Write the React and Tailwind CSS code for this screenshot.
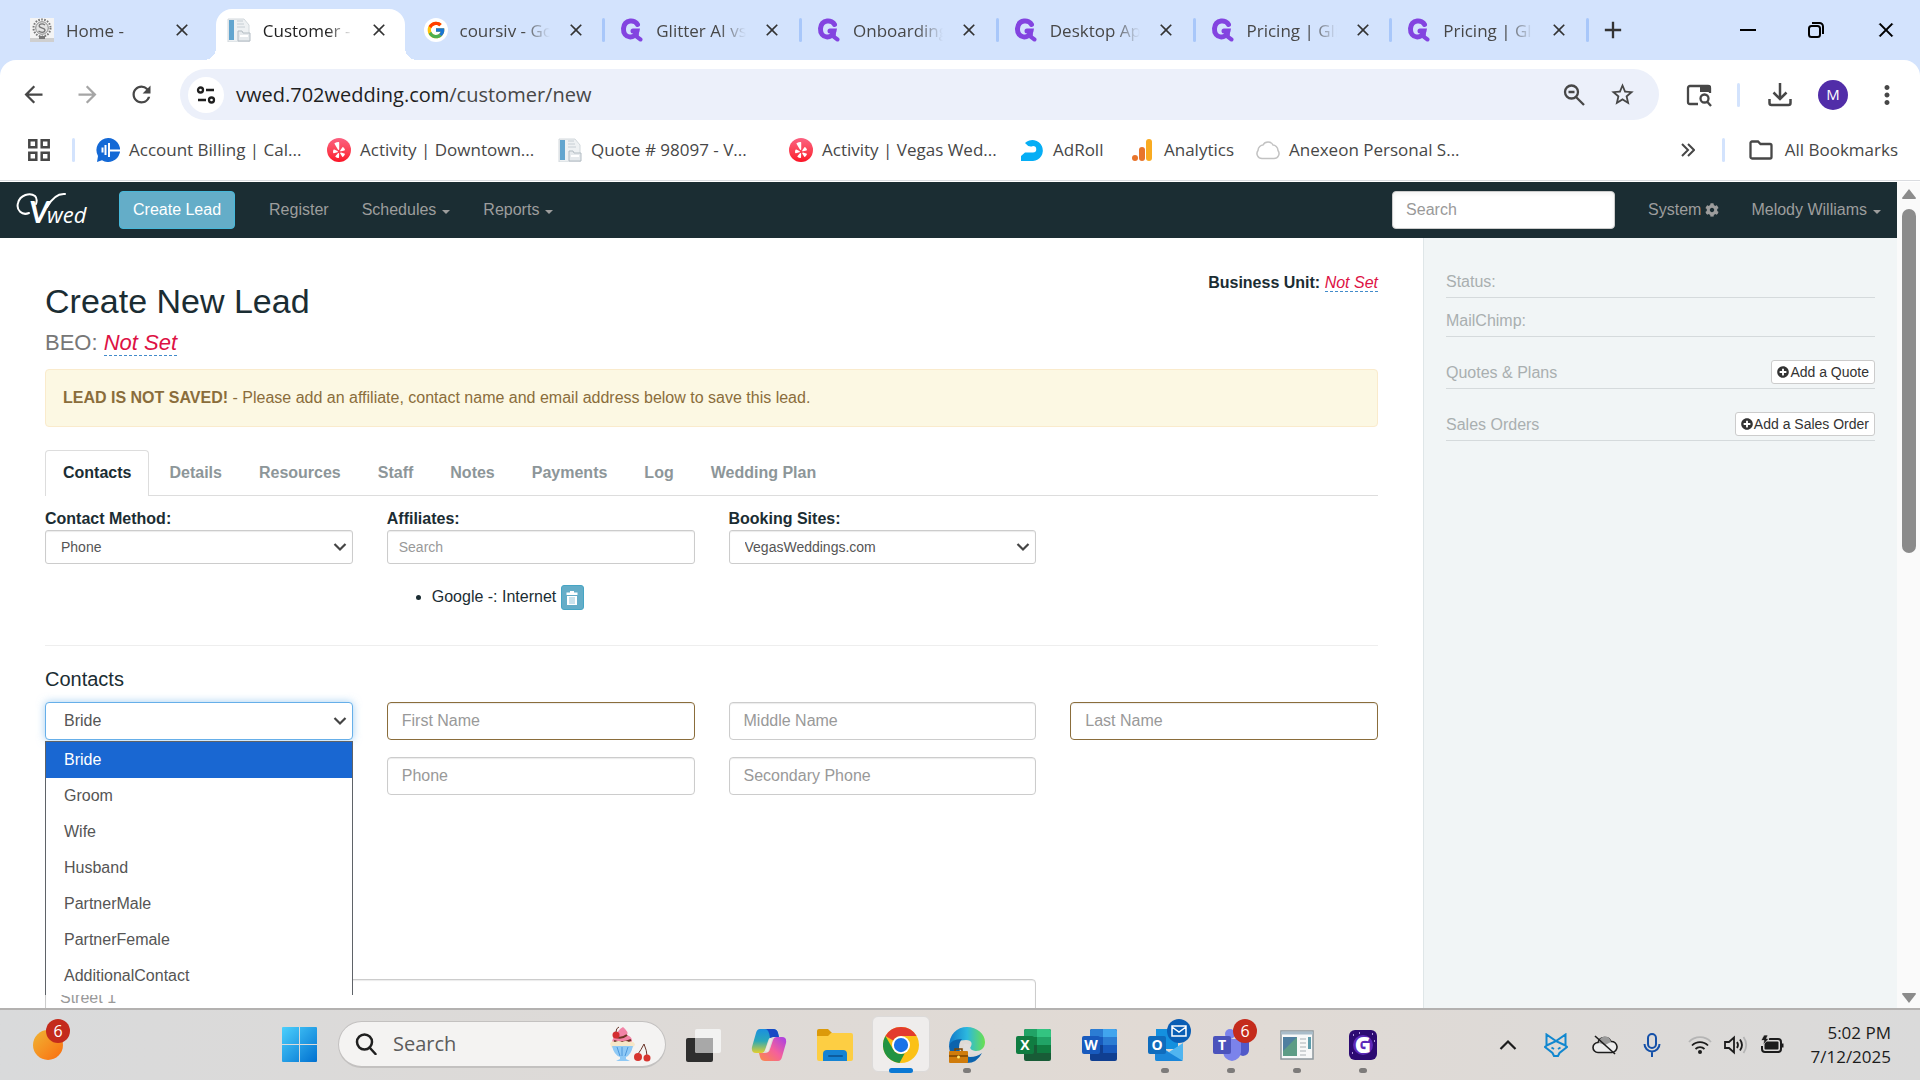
import { FcGoogle } from 'react-icons/fc';
import { FaYelp, FaCog, FaPlusCircle } from 'react-icons/fa';
import {
  MdArrowBack,
  MdArrowForward,
  MdRefresh,
  MdStarBorder,
  MdMoreVert,
  MdClose,
  MdAdd,
} from 'react-icons/md';
import { VscChromeClose } from 'react-icons/vsc';

const browserTabs = [
  { title: 'Home -', icon: 'home' },
  { title: 'Customer -', icon: 'page', active: true },
  { title: 'coursiv - Go', icon: 'google' },
  { title: 'Glitter AI vs', icon: 'glitter' },
  { title: 'Onboarding', icon: 'glitter' },
  { title: 'Desktop Ap', icon: 'glitter' },
  { title: 'Pricing | Gli', icon: 'glitter' },
  { title: 'Pricing | Gli', icon: 'glitter' },
];

const bookmarks = [
  { title: 'Account Billing | Cal...', icon: 'callrail', width: 'w-[231px]' },
  { title: 'Activity | Downtown...', icon: 'yelp', width: 'w-[231px]' },
  { title: 'Quote # 98097 - V...', icon: 'page', width: 'w-[231px]' },
  { title: 'Activity | Vegas Wed...', icon: 'yelp', width: 'w-[231px]' },
  { title: 'AdRoll', icon: 'adroll', width: 'w-[111px]' },
  { title: 'Analytics', icon: 'analytics', width: 'w-[125px]' },
  { title: 'Anexeon Personal S...', icon: 'cloud', width: 'w-[231px]' },
];

const leadTabs = ['Contacts', 'Details', 'Resources', 'Staff', 'Notes', 'Payments', 'Log', 'Wedding Plan'];

const contactTypes = [
  'Bride',
  'Groom',
  'Wife',
  'Husband',
  'PartnerMale',
  'PartnerFemale',
  'AdditionalContact',
];

const SiteIcon = ({ name }) => {
  switch (name) {
    case 'home':
      return (
        <svg viewBox="0 0 24 24" className="size-6 shrink-0">
          <rect width="24" height="24" fill="#f4f4f4" />
          <rect y="20" width="24" height="4" fill="#cfcfcf" />
          <circle cx="12" cy="10" r="8.5" fill="none" stroke="#777" strokeWidth="2" strokeDasharray="1.6 1.4" />
          <circle cx="12" cy="10" r="6.3" fill="#e4e4e4" stroke="#888" />
          <path d="M15 7c-3-2.500-7-.5-5.500 1.800 1.500 1.700 6 1 5.500 3.700-.6 2.500-4.500 2.300-6.500.6" fill="none" stroke="#777" strokeWidth="1.300" />
          <rect x="9" y="18" width="6" height="3" fill="#777" />
        </svg>
      );
    case 'page':
      return (
        <svg viewBox="0 0 24 24" className="size-6 shrink-0">
          <path d="M1 1h16l5 6v17H1z" fill="#eef1f3" stroke="#d2d8dc" />
          <rect x="2" y="2" width="5" height="20" fill="#62a5cf" />
          <path d="M10 3h6M10 6h7M10 9h8" stroke="#c6ced4" />
          <path d="M11 13h4l1 2h7v8H11z" fill="#e6eaed" stroke="#b3bcc3" />
          <path d="M13 18h8" stroke="#fff" strokeWidth="2" />
        </svg>
      );
    case 'google':
      return (
        <span className="flex size-6 shrink-0 items-center justify-center rounded-full bg-white">
          <FcGoogle className="size-5" />
        </span>
      );
    case 'glitter':
      return (
        <svg viewBox="0 0 24 24" className="size-6 shrink-0" fill="none" stroke="#8344e0" strokeLinecap="round">
          <path d="M17.500 6.500C15.500 1.800 4.500.8 3.500 10.500c-.6 10.500 12 11 13.500 2.500h-4" strokeWidth="5" />
          <path d="M16.500 13l.5 6 3.500 2.500" strokeWidth="4" />
        </svg>
      );
    case 'callrail':
      return (
        <svg viewBox="0 0 24 24" className="size-6 shrink-0">
          <path d="M12 0a12 12 0 1 1-6 22.300L1 24l1-6A12 12 0 0 1 12 0z" fill="#1469d6" />
          <path d="M6.500 9.500v5M9.500 7v10M13 5v14M13 12.500h11" stroke="#fff" strokeWidth="2" />
        </svg>
      );
    case 'yelp':
      return (
        <span className="flex size-6 shrink-0 items-center justify-center rounded-full bg-linear-to-b from-[#fb6080] to-[#fb0b22] text-white">
          <FaYelp className="size-4" />
        </span>
      );
    case 'adroll':
      return (
        <svg viewBox="0 0 24 24" className="size-6 shrink-0">
          <path d="M5 5A10.500 10.500 0 1 1 13 23H1v-5l4-3.500h8a3 3 0 0 0 0-6.500q-4 2-8-3z" fill="#06aef5" />
        </svg>
      );
    case 'analytics':
      return (
        <svg viewBox="0 0 24 24" className="size-6 shrink-0">
          <rect x="15" y="1" width="6" height="22" rx="3" fill="#f9ab21" />
          <rect x="8" y="9" width="6" height="14" rx="3" fill="#e8742b" />
          <circle cx="4" cy="20" r="3" fill="#e8742b" />
        </svg>
      );
    default:
      return (
        <svg viewBox="0 0 24 24" className="size-6 shrink-0">
          <path
            d="M6 20.500a5 5 0 0 1-4-8C2 9 5 7 7 7c2-4 8-4 10 0 2 0 5 2 5 5.500a5 5 0 0 1-4 8z"
            fill="#fff"
            stroke="#c2c2c2"
            strokeWidth="1.500"
          />
        </svg>
      );
  }
};

const TabStrip = () => (
  <div className="flex h-[60px] items-center bg-[#d3e3fd]">
    <div className="ml-[19px] flex h-full w-[1574px]">
      {browserTabs.map((tab, i) => (
        <div key={i} className="relative flex min-w-0 flex-1 items-center pl-[11px]">
          {tab.active && (
            <>
              <span className="absolute top-[9px] right-2 bottom-0 left-0 rounded-t-2xl bg-white" />
              <span className="absolute bottom-0 -left-3 size-3 bg-[radial-gradient(circle_at_0_0,transparent_12px,#fff_12px)]" />
              <span className="absolute -right-1 bottom-0 size-3 bg-[radial-gradient(circle_at_100%_0,transparent_12px,#fff_12px)]" />
            </>
          )}
          <div className="relative flex items-center">
            <SiteIcon name={tab.icon} />
            <span
              className={`ml-3 w-[90px] overflow-hidden pt-px whitespace-nowrap text-[17px] leading-6 [mask-image:linear-gradient(to_right,#000_70%,transparent)] ${
                tab.active ? 'text-[#1f1f1f]' : 'text-[#474747]'
              }`}
            >
              {tab.title}
            </span>
            <button type="button" aria-label="Close tab" className="ml-4 text-[#333]">
              <MdClose className="size-5" />
            </button>
          </div>
          {i > 1 && <span className="absolute top-[18px] right-1 h-6 w-[3px] rounded bg-[#a8c7fa]" />}
        </div>
      ))}
    </div>
    <button type="button" aria-label="New tab" className="ml-[6px] text-[#333]">
      <MdAdd className="size-7" />
    </button>
    <div className="ml-auto flex items-center gap-[51px] pr-6 text-black">
      <button type="button" aria-label="Minimize" className="h-[2px] w-4 bg-black" />
      <button type="button" aria-label="Restore">
        <svg viewBox="0 0 18 18" className="size-[18px]" fill="none" stroke="currentColor" strokeWidth="2">
          <rect x="2" y="5" width="11" height="11" rx="2.500" />
          <path d="M5 2h7.500A3.500 3.500 0 0 1 16 5.500V13" />
        </svg>
      </button>
      <button type="button" aria-label="Close">
        <VscChromeClose className="size-5" strokeWidth="0.500" />
      </button>
    </div>
  </div>
);

const Toolbar = () => (
  <div className="bg-[#d3e3fd]">
    <div className="flex h-[69px] items-center rounded-t-2xl bg-white pr-[18px] pl-5 text-[#474747]">
      <button type="button" aria-label="Back">
        <MdArrowBack className="size-[27px]" />
      </button>
      <button type="button" aria-label="Forward" className="ml-[27px] text-[#a5a5a5]">
        <MdArrowForward className="size-[27px]" />
      </button>
      <button type="button" aria-label="Reload" className="ml-[27px]">
        <MdRefresh className="size-[27px]" />
      </button>
      <div className="ml-[25px] flex h-[51px] flex-1 items-center rounded-full bg-[#ecf0fa] pr-[23px] pl-2">
        <button
          type="button"
          aria-label="Site information"
          className="flex size-9 items-center justify-center rounded-full bg-white text-[#1f1f1f]"
        >
          <svg viewBox="0 0 20 20" className="size-5" fill="none" stroke="currentColor" strokeWidth="2.300">
            <circle cx="4.500" cy="5" r="2.500" />
            <path d="M10 5h8M2 15h8" />
            <circle cx="15.500" cy="15" r="2.500" />
          </svg>
        </button>
        <p className="ml-3 flex-1 text-[20px] text-[#474747]">
          <span className="text-[#1f1f1f]">vwed.702wedding.com</span>/customer/new
        </p>
        <button type="button" aria-label="Zoom">
          <svg viewBox="0 0 22 22" className="size-[22px]" fill="none" stroke="currentColor" strokeWidth="2.300">
            <circle cx="8.500" cy="8" r="6.500" />
            <path d="M5.500 8h6M13 13l8 8" />
          </svg>
        </button>
        <button type="button" aria-label="Bookmark this page" className="ml-6">
          <MdStarBorder className="size-[27px]" />
        </button>
      </div>
      <button type="button" aria-label="Search this page" className="ml-[27px]">
        <svg viewBox="0 0 26 24" className="h-6 w-[26px]" fill="none" stroke="currentColor" strokeWidth="2.300">
          <path d="M12 21H4a2 2 0 0 1-2-2V5a2 2 0 0 1 2-2h18a2 2 0 0 1 2 2v5" />
          <path d="M14 2h8a3 3 0 0 1 3 3v4H14z" fill="currentColor" stroke="none" />
          <circle cx="18.500" cy="15.500" r="4" />
          <path d="M21 18.500l4 4.500" />
        </svg>
      </button>
      <span className="ml-[25px] h-6 w-[3px] rounded bg-[#d3e3fd]" />
      <button type="button" aria-label="Downloads" className="ml-7">
        <svg viewBox="0 0 24 24" className="size-6" fill="none" stroke="currentColor" strokeWidth="2.500">
          <path d="M12 0v15M5.500 9.500L12 16l6.500-6.500M1.500 16v4a2 2 0 0 0 2 2h17a2 2 0 0 0 2-2v-4" />
        </svg>
      </button>
      <button
        type="button"
        className="ml-[26px] flex size-[30px] items-center justify-center rounded-full bg-[#512da8] text-[15px] text-white"
      >
        M
      </button>
      <button type="button" aria-label="Menu" className="ml-6">
        <MdMoreVert className="size-[30px]" />
      </button>
    </div>
  </div>
);

const Bookmarks = () => (
  <div className="flex h-[52px] items-center border-b border-[#dadce0] bg-white pr-[22px] pb-[10px] pl-7 text-[17px] text-[#474747]">
    <svg viewBox="0 0 22 22" className="size-[22px]" fill="none" stroke="currentColor" strokeWidth="2.500">
      <path d="M1.300 1.300h7v7h-7zM13.700 1.300h7v7h-7zM1.300 13.700h7v7h-7zM13.700 13.700h7v7h-7z" />
    </svg>
    <span className="mr-[21px] ml-[22px] h-6 w-[3px] rounded bg-[#d3e3fd]" />
    {bookmarks.map((b) => (
      <a key={b.title} href="#" className={`flex shrink-0 items-center gap-[9px] whitespace-nowrap ${b.width}`}>
        <SiteIcon name={b.icon} />
        {b.title}
      </a>
    ))}
    <svg viewBox="0 0 14 14" className="ml-auto size-[14px]" fill="none" stroke="currentColor" strokeWidth="2">
      <path d="M1 1l6 6-6 6M7 1l6 6-6 6" />
    </svg>
    <span className="ml-[27px] h-6 w-[3px] rounded bg-[#d3e3fd]" />
    <a href="#" className="ml-6 flex items-center gap-3">
      <svg viewBox="0 0 24 20" className="h-5 w-6" fill="none" stroke="currentColor" strokeWidth="2.300">
        <path d="M1.500 3a1.500 1.500 0 0 1 1.500-1.500h6L11.500 4H21a1.500 1.500 0 0 1 1.500 1.500V17a1.500 1.500 0 0 1-1.500 1.500H3A1.500 1.500 0 0 1 1.500 17z" />
      </svg>
      All Bookmarks
    </a>
  </div>
);

const Caret = () => (
  <svg viewBox="0 0 8 4" className="mt-[3px] h-1 w-2" fill="currentColor">
    <path d="M0 0h8L4 4z" />
  </svg>
);

const Navbar = () => (
  <nav className="flex h-14 items-center bg-[#1b2d33] pr-4 pl-4 text-[#9d9d9d]">
    <a href="#" aria-label="Vwed">
      <svg viewBox="0 0 74 36" className="h-9 w-[74px]" fill="none" stroke="#fff" strokeLinecap="round">
        {/* swash around the V */}
        <path d="M13 21C6 24 0 18 2 11 4 3 14 0 19 4c2 2 2 5 1 8" strokeWidth="2" />
        <path d="M31 15Q39 1 49 2" strokeWidth="2" />
        <text x="13" y="31" fill="#fff" stroke="none" fontStyle="italic">
          <tspan fontFamily="Lato" fontSize="31" fontWeight="700">
            V
          </tspan>
          <tspan x="31" fontFamily="Open Sans" fontSize="22">
            wed
          </tspan>
        </text>
      </svg>
    </a>
    <button
      type="button"
      className="ml-[29px] h-[38px] rounded border border-[#46b8da] bg-[#64adc8] px-[13px] text-white"
    >
      Create Lead
    </button>
    <a href="#" className="ml-[34px]">
      Register
    </a>
    <a href="#" className="ml-[33px] flex items-center gap-[6px]">
      Schedules <Caret />
    </a>
    <a href="#" className="ml-[33px] flex items-center gap-[6px]">
      Reports <Caret />
    </a>
    <input
      type="text"
      aria-label="Search"
      placeholder="Search"
      className="ml-auto h-[38px] w-[223px] rounded border border-[#ccc] bg-white px-[13px] shadow-inner placeholder:text-[#999]"
    />
    <a href="#" className="ml-[33px] flex items-center gap-1">
      System <FaCog className="size-[14px]" />
    </a>
    <a href="#" className="ml-8 flex items-center gap-[6px]">
      Melody Williams <Caret />
    </a>
  </nav>
);

const NotSet = () => (
  <a href="#" className="border-b border-dashed border-[#428bca] text-[#dd1144] italic">
    Not Set
  </a>
);

const SelectArrow = () => (
  <svg
    viewBox="0 0 14 10"
    className="pointer-events-none absolute top-1/2 right-[6px] h-[10px] w-[14px] -translate-y-1/2"
    fill="none"
    stroke="#444"
    strokeWidth="2.200"
  >
    <path d="M1.500 2L7 7.500 12.500 2" />
  </svg>
);

const smallField =
  'h-[34px] w-full appearance-none rounded-[3px] border border-[#ccc] bg-white text-[14px] text-[#555] shadow-[inset_0_1px_1px_rgba(0,0,0,0.08)] placeholder:text-[#999]';
const field =
  'h-[38px] w-full appearance-none rounded border bg-white px-[14px] text-[#555] shadow-[inset_0_1px_1px_rgba(0,0,0,0.08)] placeholder:text-[#999]';

const LeadForm = () => (
  <main className="min-w-0 flex-1 px-[45px] pt-[37px]">
    <div className="flex items-start justify-between">
      <div className="pt-[7px]">
        <h1 className="text-[34px] leading-[38px]">Create New Lead</h1>
        <p className="mt-[10px] mb-[13px] text-[22px] leading-[26px] text-[#777]">
          BEO: <NotSet />
        </p>
      </div>
      <p className="leading-4">
        <b>Business Unit:</b> <NotSet />
      </p>
    </div>

    <div className="flex h-[58px] items-center rounded border border-[#faebcc] bg-[#fcf8e3] px-[17px] text-[#8a6d3b]">
      <p>
        <b>LEAD IS NOT SAVED!</b> - Please add an affiliate, contact name and email address below to save this lead.
      </p>
    </div>

    <div className="mt-[23px] flex h-[46px] gap-[3px] border-b border-[#ddd] font-bold text-[#8d9699]">
      {leadTabs.map((tab, i) => (
        <button
          key={tab}
          type="button"
          className={
            i === 0
              ? '-mb-px rounded-t border border-b-0 border-[#ddd] bg-white px-[17px] pb-[2px] text-[#1b2d33]'
              : 'px-[17px]'
          }
        >
          {tab}
        </button>
      ))}
    </div>

    <div className="mt-[13px] grid grid-cols-4 gap-x-[34px]">
      <div>
        <label htmlFor="method" className="mb-px block leading-5 font-bold">
          Contact Method:
        </label>
        <div className="relative">
          <select id="method" className={`${smallField} px-[15px]`}>
            <option>Phone</option>
          </select>
          <SelectArrow />
        </div>
      </div>
      <div>
        <label htmlFor="affiliates" className="mb-px block leading-5 font-bold">
          Affiliates:
        </label>
        <input id="affiliates" type="text" placeholder="Search" className={`${smallField} px-[11px]`} />
        <ul className="mt-[20px] list-disc pl-[45px]">
          <li className="leading-[26px]">
            Google -: Internet{' '}
            <button
              type="button"
              aria-label="Remove affiliate"
              className="inline-flex h-[25px] w-[23px] items-center justify-center rounded-[3px] border border-[#46a5c4] bg-[#64adc8] align-middle text-white"
            >
              <svg viewBox="0 0 12 14" className="h-[14px] w-3" fill="currentColor">
                <path d="M4 0h4v1.500h3.500V4H.5V1.500H4z" />
                <path d="M1 5h10v9H1z" />
                <path d="M4 6v7M6 6v7M8 6v7" stroke="#64adc8" strokeWidth=".7" />
              </svg>
            </button>
          </li>
        </ul>
      </div>
      <div>
        <label htmlFor="sites" className="mb-px block leading-5 font-bold">
          Booking Sites:
        </label>
        <div className="relative">
          <select id="sites" className={`${smallField} px-[15px]`}>
            <option>VegasWeddings.com</option>
          </select>
          <SelectArrow />
        </div>
      </div>
    </div>

    <hr className="mt-[35px] border-[#eee]" />
    <h4 className="mt-[22px] mb-3 text-[20px] leading-[22px]">Contacts</h4>

    <div className="grid grid-cols-4 gap-x-[34px] gap-y-[17px]">
      <div className="relative z-10">
        <select
          aria-label="Contact type"
          className="h-[38px] w-full appearance-none rounded border border-[#66afe9] bg-white px-[18px] text-[#555] shadow-[0_0_9px_rgba(102,175,233,0.6)] outline-none"
        >
          {contactTypes.map((type) => (
            <option key={type}>{type}</option>
          ))}
        </select>
        <SelectArrow />
        <ul
          role="listbox"
          aria-label="Contact types"
          className="absolute top-[39px] left-0 h-[254px] w-full border border-b-0 border-[#5f6368] bg-white text-[#555]"
        >
          {contactTypes.map((type, i) => (
            <li
              key={type}
              role="option"
              aria-selected={i === 0}
              className={`h-9 px-[18px] leading-9 ${i === 0 ? 'bg-[#1967d2] text-white' : ''}`}
            >
              {type}
            </li>
          ))}
        </ul>
      </div>
      <input type="text" aria-label="First Name" placeholder="First Name" className={`${field} border-[#8a6d3b]`} />
      <input type="text" aria-label="Middle Name" placeholder="Middle Name" className={`${field} border-[#ccc]`} />
      <input type="text" aria-label="Last Name" placeholder="Last Name" className={`${field} border-[#8a6d3b]`} />
      <input type="text" aria-label="Phone" placeholder="Phone" className={`${field} col-start-2 border-[#ccc]`} />
      <input
        type="text"
        aria-label="Secondary Phone"
        placeholder="Secondary Phone"
        className={`${field} border-[#ccc]`}
      />
      <input
        type="text"
        aria-label="Street 1"
        placeholder="Street 1"
        className={`${field} col-span-3 col-start-1 mt-[167px] border-[#ccc]`}
      />
    </div>
  </main>
);

const Sidebar = () => (
  <aside className="w-[474px] border-l border-[#dfe6e8] bg-[#f1f5f6] px-[22px] pt-[21px] text-[#a9afb0]">
    <p className="border-b border-[#d5dadc] pt-[13px] pb-[5px] leading-5">Status:</p>
    <p className="border-b border-[#d5dadc] pt-[13px] pb-[5px] leading-5">MailChimp:</p>
    <div className="mt-[23px] flex h-[29px] items-start justify-between border-b border-[#d5dadc]">
      <span className="leading-[26px]">Quotes &amp; Plans</span>
      <button
        type="button"
        className="flex h-6 items-center gap-px rounded-[3px] border border-[#ccc] bg-white px-[5px] text-[14px] text-[#333]"
      >
        <FaPlusCircle className="size-3" />
        Add a Quote
      </button>
    </div>
    <div className="mt-[23px] flex h-[29px] items-start justify-between border-b border-[#d5dadc]">
      <span className="leading-[26px]">Sales Orders</span>
      <button
        type="button"
        className="flex h-6 items-center gap-px rounded-[3px] border border-[#ccc] bg-white px-[5px] text-[14px] text-[#333]"
      >
        <FaPlusCircle className="size-3" />
        Add a Sales Order
      </button>
    </div>
  </aside>
);

const ScrollBar = () => (
  <div className="flex w-[23px] flex-col items-center bg-[#fafafa] pt-[6px] pb-1">
    <svg viewBox="0 0 16 12" className="h-3 w-4" fill="#8b8b8b">
      <path d="M8 1l7 9q0 1-1 1H2q-1 0-1-1z" />
    </svg>
    <div className="mt-[9px] h-[344px] w-[14px] rounded-full bg-[#8b8b8b]" />
    <svg viewBox="0 0 16 12" className="mt-auto h-3 w-4" fill="#8b8b8b">
      <path d="M8 11l7-9q0-1-1-1H2q-1 0-1 1z" />
    </svg>
  </div>
);

const OfficeIcon = ({ letter, dark, shades }) => (
  <svg viewBox="0 0 36 36" className="size-9">
    <rect x="9" y="2" width="27" height="32" rx="2" fill={shades[0]} />
    <path d="M9 4q0-2 2-2h11v8H9z" fill={shades[2]} />
    <path d="M22 2h12q2 0 2 2v6H22z" fill={shades[1]} />
    <path d="M9 10h13v8H9z" fill={shades[3]} />
    <path d="M22 10h14v8H22z" fill={shades[2]} />
    <path d="M22 18h14v8H22z" fill={shades[3]} />
    <rect x="1" y="9" width="18" height="18" rx="2" fill={dark} />
    <text x="10" y="23" textAnchor="middle" fill="#fff" fontFamily="Open Sans" fontWeight="700" fontSize="14">
      {letter}
    </text>
  </svg>
);

const AppIcon = ({ name }) => {
  switch (name) {
    case 'Task view':
      return (
        <svg viewBox="0 0 36 36" className="size-9">
          <rect x="1" y="11" width="27" height="24" rx="2" fill="#2e2e2e" />
          <rect x="10" y="2" width="26" height="24" rx="2" fill="#f6f6f6" fillOpacity=".85" />
          <path d="M10 11h18v15H12q-2 0-2-2z" fill="#a8a8a8" />
        </svg>
      );
    case 'Copilot':
      return (
        <svg viewBox="0 0 36 36" className="size-9">
          <defs>
            <linearGradient id="cop1" x1="0" y1="0" x2="0" y2="1">
              <stop offset="0" stopColor="#1b8fe0" />
              <stop offset=".5" stopColor="#2aa8b8" />
              <stop offset="1" stopColor="#e3cf2d" />
            </linearGradient>
            <linearGradient id="cop2" x1="1" y1="0" x2="0" y2="1">
              <stop offset="0" stopColor="#a63fe8" />
              <stop offset=".5" stopColor="#f4609c" />
              <stop offset="1" stopColor="#fb8b45" />
            </linearGradient>
          </defs>
          <path d="M9 2h13q4 0 5 4l1 4h-6q-4 0-5 4l-3 9q-1 3-4 3H5q-5 0-4-6l4-14q1-4 4-4z" fill="url(#cop1)" />
          <path d="M14 2h8q4 0 5 4l1 4h-6l-3 1q-1-9-5-9z" fill="#1749c4" />
          <path d="M27 34H14q-4 0-5-4l-1-4h6q4 0 5-4l3-9q1-3 4-3h5q5 0 4 6l-4 14q-1 4-4 4z" fill="url(#cop2)" />
          <path d="M19 11l2 1-4 13-3-1z" fill="#eee8e4" />
        </svg>
      );
    case 'File Explorer':
      return (
        <svg viewBox="0 0 36 36" className="size-9">
          <path d="M0 4q0-2 2-2h9l4 4v6H0z" fill="#dc9a09" />
          <path d="M14 6h20q2 0 2 2v24q0 2-2 2H2q-2 0-2-2V9h11z" fill="#fdce43" />
          <path d="M6 34v-7q0-4 4-4h16q4 0 4 4v7z" fill="#1583d3" />
          <path d="M12 29h13" stroke="#0d5c9e" strokeWidth="2" strokeLinecap="round" />
        </svg>
      );
    case 'Chrome':
      return (
        <svg viewBox="0 0 48 48" className="size-9">
          <circle cx="24" cy="24" r="24" fill="#fbc116" />
          <path d="M24 0a24 24 0 0 1 20.800 12H24a12 12 0 0 0-10.400 6L3.200 12A24 24 0 0 1 24 0z" fill="#e33b2e" />
          <path d="M3.200 12l10.400 18A12 12 0 0 0 24 36q3 0 5-1L22 48A24 24 0 0 1 3.200 12z" fill="#229342" />
          <circle cx="24" cy="24" r="12" fill="#fff" />
          <circle cx="24" cy="24" r="9.500" fill="#1a73e8" />
        </svg>
      );
    case 'Edge':
      return (
        <svg viewBox="0 0 36 36" className="size-9">
          <defs>
            <linearGradient id="edge1" x1="0" y1="0" x2="1" y2="0">
              <stop offset="0" stopColor="#0f78c9" />
              <stop offset=".5" stopColor="#2cb8df" />
              <stop offset="1" stopColor="#6ae04f" />
            </linearGradient>
          </defs>
          <path d="M0 20C0 7 8 0 18 0s18 7 18 15c0 6-4 9-9 9-4 0-6-1-6-3 3-4 2-8-4-8S0 16 0 20z" fill="url(#edge1)" />
          <path d="M0 19q2-7 13-7-3 3-3 9 1 8 11 9 7 0 12-4-5 10-15 10Q1 35 0 19z" fill="#0c63ad" />
          <path d="M15 17q-2 10 8 10 6 0 11-2-3-1-8-1-5-1-5-4 0-4-6-3z" fill="#e1dedc" />
          <rect x="0" y="24" width="19" height="12" rx="1" fill="#d07c0c" />
          <path d="M6 24v-2h7v2M0 29h19" stroke="#7c4600" strokeWidth="1.500" fill="none" />
          <circle cx="9.500" cy="30" r="1.500" fill="#ffe36b" />
        </svg>
      );
    case 'Excel':
      return <OfficeIcon letter="X" dark="#107c41" shades={['#185c37', '#33c481', '#21a366', '#107c41']} />;
    case 'Word':
      return <OfficeIcon letter="W" dark="#185abd" shades={['#103f91', '#41a5ee', '#2b7cd3', '#185abd']} />;
    case 'Outlook':
      return (
        <svg viewBox="0 0 36 36" className="size-9">
          <rect x="9" y="2" width="22" height="20" fill="#1490df" />
          <path d="M8 16l14 9 14-9v16q0 2-2 2H10q-2 0-2-2z" fill="#50b5f0" />
          <path d="M8 17l28 17H10q-2 0-2-2z" fill="#1a86d9" />
          <rect x="1" y="9" width="18" height="18" rx="2" fill="#0f6cbd" />
          <text x="10" y="23" textAnchor="middle" fill="#fff" fontFamily="Open Sans" fontWeight="700" fontSize="14">
            O
          </text>
        </svg>
      );
    case 'Teams':
      return (
        <svg viewBox="0 0 36 36" className="size-9">
          <circle cx="17" cy="7" r="5" fill="#7b83eb" />
          <path d="M24 12h12v11q0 5-6 6-6-1-6-6z" fill="#5059c9" />
          <path d="M10 12h18v13q-1 8-9 9-8-1-9-9z" fill="#7b83eb" />
          <rect x="0" y="9" width="18" height="18" rx="2" fill="#4b53bc" />
          <text x="9" y="23" textAnchor="middle" fill="#fff" fontFamily="Open Sans" fontWeight="700" fontSize="14">
            T
          </text>
        </svg>
      );
    case 'Viewer':
      return (
        <svg viewBox="0 0 36 36" className="size-9">
          <rect x="2" y="4" width="32" height="28" fill="#f7f8f8" stroke="#8d979c" strokeWidth="1.500" />
          <path d="M2 6h32" stroke="#a9bcc9" strokeWidth="3" />
          <rect x="4" y="10" width="14" height="19" fill="#5d9c85" />
          <path d="M4 10h14L4 24z" fill="#4f7fa0" />
          <path d="M21 12h6M21 16h6M21 20h6M21 24h6M21 28h6" stroke="#d0d4d6" strokeWidth="2" />
          <rect x="29" y="10" width="3" height="12" fill="#5d9cab" />
        </svg>
      );
    default:
      return (
        <svg viewBox="0 0 36 36" className="size-9">
          <rect x="4" y="3" width="28" height="30" rx="6" fill="#2c0a72" />
          <circle cx="18" cy="18" r="10" fill="#5c28b8" />
          <path d="M8 8h1M27 7h1M29 14h1M7 26h1M14 6h1" stroke="#d9c4ff" strokeWidth="1.500" />
          <text x="18" y="26" textAnchor="middle" fill="#fff" fontFamily="Open Sans" fontWeight="800" fontSize="22">
            G
          </text>
        </svg>
      );
  }
};

const apps = [
  { name: 'Task view' },
  { name: 'Copilot' },
  { name: 'File Explorer' },
  { name: 'Chrome', active: true },
  { name: 'Edge', running: true },
  { name: 'Excel' },
  { name: 'Word' },
  { name: 'Outlook', running: true, mail: true },
  { name: 'Teams', running: true, badge: 6 },
  { name: 'Viewer', running: true },
  { name: 'Glitter', running: true },
];

const Tray = () => (
  <div className="ml-auto flex items-center pr-[29px] text-[#1c1c1c]">
    <svg viewBox="0 0 18 12" className="h-3 w-[18px]" fill="none" stroke="currentColor" strokeWidth="2.200">
      <path d="M1.500 10L9 2.500l7.500 7.500" />
    </svg>
    <svg viewBox="0 0 24 24" className="ml-[27px] size-6" fill="none" stroke="#1187cf" strokeWidth="2">
      <path d="M2.500 1.500v11L1 14l7.500 6L10 23h4l1.500-3 7.500-6-1.500-1.500v-11L12 8zM2.500 12.500L12 8l9.500 4.500" />
      <path d="M7.500 14.500l2.500 1.500M16.500 14.500L14 16" />
    </svg>
    <svg viewBox="0 0 26 20" className="ml-6 h-5 w-[26px]" fill="none" stroke="currentColor" strokeWidth="1.600">
      <path d="M6 17.500a5 5 0 0 1 0-10 7 7 0 0 1 13-1 5.500 5.500 0 0 1 1 11z" fill="#ececec" />
      <path d="M7 8a6 6 0 0 1 12-1l-6 3z" fill="#9b9b9b" stroke="none" />
      <path d="M3 1l20 18" />
    </svg>
    <svg viewBox="0 0 18 24" className="ml-[25px] h-6 w-[18px]" fill="none" stroke="#1450a8" strokeWidth="2">
      <rect x="5" y="1" width="8" height="14" rx="4" />
      <path d="M1.500 11a7.500 7.500 0 0 0 15 0M9 19v5" />
    </svg>
    <svg viewBox="0 0 24 20" className="ml-[27px] h-5 w-6" fill="none" stroke="currentColor" strokeWidth="1.800">
      <path d="M1 7a15 15 0 0 1 22 0" stroke="#b5b5b5" />
      <path d="M4 10.500a11 11 0 0 1 16 0M7.500 14a6.500 6.500 0 0 1 9 0" />
      <circle cx="12" cy="17" r="2" fill="currentColor" stroke="none" />
    </svg>
    <svg viewBox="0 0 24 20" className="ml-3 h-5 w-6" fill="none" stroke="currentColor" strokeWidth="1.800">
      <path d="M1 7v6h4l5 4.500v-15L5 7zM13 7q2 3 0 6M16 4.500q4 5.500 0 11" />
      <path d="M19.500 2q5.500 8 0 16" stroke="#b5b5b5" />
    </svg>
    <svg viewBox="0 0 24 20" className="ml-3 h-5 w-6" fill="none" stroke="currentColor" strokeWidth="2">
      <path d="M9 4h9a3 3 0 0 1 3 3v7a3 3 0 0 1-3 3H5a3 3 0 0 1-3-3v-3" />
      <rect x="4.500" y="6.500" width="14" height="8" rx="1" fill="currentColor" stroke="none" />
      <path d="M22.500 8.500v4" />
      <path d="M4 0h4L6.500 3.500H9L3 10l1-4.500H1z" fill="currentColor" stroke="#dedbda" strokeWidth=".7" />
    </svg>
    <div className="ml-[26px] text-right text-[17px] leading-6">
      <p>5:02 PM</p>
      <p>7/12/2025</p>
    </div>
  </div>
);

const Taskbar = () => (
  <footer className="relative z-20 flex h-[72px] shrink-0 items-center border-t-2 border-[#b3b1b0] bg-linear-to-r from-[#d9dadb] from-0% via-[#e1dad4] via-60% to-[#dadada] pb-px">
    <button type="button" aria-label="Weather" className="relative ml-[33px] size-[30px]">
      <span className="block size-[30px] rounded-full bg-linear-to-br from-[#eeb433] to-[#f96a0b]" />
      <span className="absolute -top-[11px] left-[13px] flex size-6 items-center justify-center rounded-full bg-[#c42b1c] text-[16px] text-white">
        6
      </span>
    </button>
    <button type="button" aria-label="Start" className="ml-[219px]">
      <svg viewBox="0 0 35 35" className="size-[35px]">
        <defs>
          <linearGradient id="win" x1="0" y1="0" x2="1" y2="1">
            <stop offset="0" stopColor="#4cd0fc" />
            <stop offset="1" stopColor="#0070d0" />
          </linearGradient>
        </defs>
        <path
          d="M1 0h16v17H0V1q0-1 1-1zM18 0h16q1 0 1 1v16H18zM0 18h17v17H1q-1 0-1-1zM18 18h17v16q0 1-1 1H18z"
          fill="url(#win)"
        />
      </svg>
    </button>
    <div className="ml-[21px] flex h-[47px] w-[328px] items-center rounded-full border border-b-2 border-[#c3c1c0] bg-[#f4f3f2] pr-[14px] pl-4">
      <svg viewBox="0 0 22 22" className="size-[22px]" fill="none" stroke="#1f1f1f" strokeWidth="2.500">
        <circle cx="9.500" cy="9" r="7.500" />
        <path d="M14.500 14.500l6 6.500" strokeLinecap="round" />
      </svg>
      <input
        type="text"
        aria-label="Taskbar search"
        placeholder="Search"
        className="ml-4 w-40 min-w-0 flex-1 bg-transparent text-[20px] placeholder:text-[#5c5c5c]"
      />
      <svg viewBox="0 0 42 36" className="h-9 w-[42px]">
        <path d="M3 17q0-6 5-7 0-6 6-9 6 5 4 8 6 2 5 8z" fill="#f283a6" />
        <path d="M7 11q6 2 11-2M5 15q8 3 17-1" stroke="#6c3524" strokeWidth="2" fill="none" />
        <path d="M1 18q1-4 5-2 4-2 7 0 4-2 7 0 5-2 6 3l-3 3H3z" fill="#f6e7c8" />
        <path d="M3 20h21q-2 9-7 11v2l4 2H7l4-2v-2q-6-2-8-11z" fill="#8fc9f5" />
        <path d="M8 21l3 9M13 21v9M19 21l-3 9" stroke="#4c98dc" />
        <circle cx="7" cy="9" r="3.500" fill="#d32d31" />
        <path d="M7 6q0-4 3-5M29 28q3-4 6-10 3 7 3 12" stroke="#6b352a" fill="none" />
        <circle cx="29" cy="31" r="4" fill="#d7352f" />
        <circle cx="38" cy="32" r="3.500" fill="#d7352f" />
      </svg>
    </div>
    <div className="ml-1 flex h-full">
      {apps.map((app) => (
        <button
          key={app.name}
          type="button"
          aria-label={app.name}
          className="relative flex w-[66px] items-center justify-center"
        >
          {app.active && (
            <span className="absolute top-[6px] left-1 h-[56px] w-[58px] rounded-md border border-[#dcdad9] bg-[#efedec]" />
          )}
          <span className="relative">
            <AppIcon name={app.name} />
            {app.mail && (
              <span className="absolute -top-2 left-5 flex size-6 items-center justify-center rounded-full bg-[#0a5eb5]">
                <svg viewBox="0 0 16 12" className="h-3 w-4" fill="none" stroke="#fff" strokeWidth="1.500">
                  <path d="M1 1h14v10H1zM1 2l7 5 7-5" />
                </svg>
              </span>
            )}
            {app.badge && (
              <span className="absolute -top-2 left-5 flex size-6 items-center justify-center rounded-full bg-[#c42b1c] text-[16px] text-white">
                {app.badge}
              </span>
            )}
          </span>
          {app.active && <span className="absolute bottom-[6px] h-[5px] w-6 rounded-full bg-[#0a78d4]" />}
          {app.running && <span className="absolute bottom-[6px] h-[5px] w-2 rounded-full bg-[#7d7b7a]" />}
        </button>
      ))}
    </div>
    <Tray />
  </footer>
);

const App = () => {
  return (
    <div className="flex h-screen flex-col overflow-hidden bg-white font-['Open_Sans',sans-serif]">
      <header className="shrink-0">
        <TabStrip />
        <Toolbar />
        <Bookmarks />
      </header>
      <div className="flex min-h-0 flex-1 overflow-hidden pt-px">
        <div className="flex min-w-0 flex-1 flex-col font-['Liberation_Sans',Arial,sans-serif] text-[16px] text-[#1b2d33]">
          <Navbar />
          <div className="flex min-h-0 flex-1">
            <LeadForm />
            <Sidebar />
          </div>
        </div>
        <ScrollBar />
      </div>
      <Taskbar />
    </div>
  );
};

export default App;
